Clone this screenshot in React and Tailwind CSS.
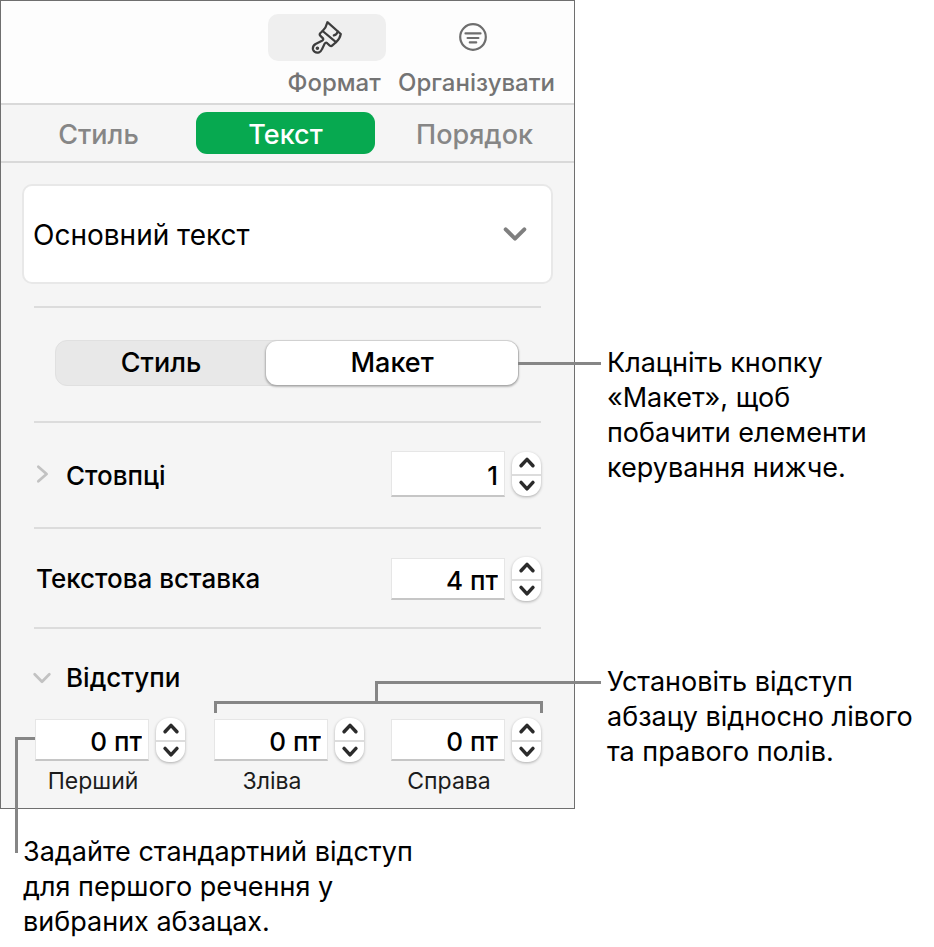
import React, { useState } from 'react';
import clsx from 'clsx';

const TABS = ['Стиль', 'Текст', 'Порядок'];
const VIEWS = ['Стиль', 'Макет'];

const Chevron = ({ d, className }) => (
    <svg
        viewBox="0 0 24 24"
        className={className}
        fill="none"
        stroke="currentColor"
        strokeLinecap="round"
        strokeLinejoin="round"
        aria-hidden="true"
    >
        <path d={d} />
    </svg>
);

const BrushIcon = () => (
    <svg
        viewBox="0 0 32 34"
        className="w-8 h-[34px]"
        fill="none"
        stroke="#3d3d3d"
        strokeWidth="2.2"
        strokeLinecap="round"
        strokeLinejoin="round"
        aria-hidden="true"
    >
        <path d="M16.4 1.2 L29.8 13 Q29 17.600 25 21.200 L11.6 10 Q15.2 6.4 16.4 1.2 Z" />
        <path d="M22.8 14.4 Q25.8 13.6 26.8 10.6" />
        <path d="M11.6 10 L9.2 12.2 Q8.2 13.4 9.2 14.6 L12 17.4 Q12.8 18.8 11 19.8 L4.6 23 Q1.2 25.200 2 28.600 Q3.800 32.600 8 31.400 Q10 30.600 11 28.200 L13.600 22.800 Q14.600 21 16.200 22.200 L18.800 24.600 Q20.200 25.600 21.400 24.400 L25 21.200" />
        <circle cx="6.400" cy="27.200" r="0.700" fill="#3d3d3d" />
    </svg>
);

const OrganizeIcon = () => (
    <svg
        viewBox="0 0 30 30"
        className="w-[30px] h-[30px]"
        fill="none"
        stroke="#6e6e6e"
        strokeWidth="2.2"
        strokeLinecap="round"
        aria-hidden="true"
    >
        <circle cx="15" cy="14" r="12.8" />
        <path d="M7.500 10.400 H22.500 M9.600 15 H20.400 M11.800 19.400 H18.200" />
    </svg>
);

const Stepper = ({ label, onStep }) => (
    <div className="flex flex-col w-[29px] h-11 shrink-0 rounded-[13px] bg-white shadow-[0_1px_3px_rgba(0,0,0,0.3)] text-[#2b2b2b]">
        <button
            type="button"
            aria-label={`${label}: збільшити`}
            onClick={() => onStep(1)}
            className="flex-1 flex items-center justify-center border-b-2 border-[#dcdcdc]"
        >
            <Chevron d="M5.500 15 L12 8 L18.500 15" className="w-[22px] h-[22px] stroke-[3.8]" />
        </button>
        <button
            type="button"
            aria-label={`${label}: зменшити`}
            onClick={() => onStep(-1)}
            className="flex-1 flex items-center justify-center"
        >
            <Chevron d="M5.500 7 L12 14 L18.500 7" className="w-[22px] h-[22px] stroke-[3.8]" />
        </button>
    </div>
);

const NumberField = ({ id, label, initial, unit, tall }) => {
    const [value, setValue] = useState(initial);

    return (
        <div className="flex items-center gap-[7px]">
            <input
                id={id}
                type="text"
                value={unit ? `${value} ${unit}` : value}
                onChange={(e) => setValue(parseInt(e.target.value, 10) || 0)}
                className={clsx(
                    'w-[114px] bg-white border border-[#e6e6e6] border-b-2 border-b-[#c6c6c6] pt-[3px] pr-[6px] text-right text-[26px] leading-8 font-medium text-black outline-none',
                    tall ? 'h-[46px]' : 'h-[42px]'
                )}
            />
            <Stepper label={label} onStep={(n) => setValue((v) => Math.max(0, v + n))} />
        </div>
    );
};

const IndentField = ({ id, label }) => (
    <div>
        <NumberField id={id} label={label} initial={0} unit="пт" />
        <label htmlFor={id} className="block w-[116px] mt-[5px] text-center text-[23px] leading-7 text-[#1c1c1c]">
            {label}
        </label>
    </div>
);

const Divider = () => <hr className="border-t-2 border-[#dcdcdc]" />;

const FormatPanel = () => {
    const [activeTab, setActiveTab] = useState('Текст');
    const [view, setView] = useState('Макет');

    return (
        <section className="border border-[#6f6f6f] bg-[#f5f5f5]">
            {/* toolbar */}
            <div className="flex justify-end gap-3 bg-[#fdfdfd] border-b-2 border-[#d9d9d9] pt-[13px] pb-[6px] pr-[19px] text-2xl leading-7 font-medium text-[#747474]">
                <button type="button" className="flex flex-col items-center gap-2">
                    <span className="flex items-center justify-center w-[118px] h-[47px] rounded-[10px] bg-[#efefef]">
                        <BrushIcon />
                    </span>
                    <span className="pl-[14px] leading-7">Формат</span>
                </button>
                <button type="button" className="flex flex-col items-center gap-2">
                    <span className="flex items-center justify-center h-[47px] pr-2">
                        <OrganizeIcon />
                    </span>
                    <span className="leading-7">Організувати</span>
                </button>
            </div>

            {/* tabs */}
            <div className="grid grid-cols-[195fr_179fr_199fr] border-b-2 border-[#d9d9d9] py-[7px]">
                {TABS.map((tab) => (
                    <button
                        key={tab}
                        type="button"
                        onClick={() => setActiveTab(tab)}
                        className={clsx(
                            'h-[42px] rounded-[11px] pt-[3px] text-[27px] leading-8 font-medium',
                            activeTab === tab ? 'bg-[#07a950] text-white' : 'text-[#868686]'
                        )}
                    >
                        {tab}
                    </button>
                ))}
            </div>

            <div className="px-[21px] pt-[21px]">
                <div className="relative">
                    <select
                        aria-label="Стиль абзацу"
                        className="appearance-none w-full h-[100px] rounded-[10px] border-2 border-[#e8e8e8] bg-white pt-[2px] pl-[9px] text-[28px] text-black outline-none"
                    >
                        <option>Основний текст</option>
                    </select>
                    <Chevron
                        d="M4 8 L12 16 L20 8"
                        className="pointer-events-none absolute right-6 top-9 w-7 h-7 stroke-[3.4] text-[#7f7f7f]"
                    />
                </div>
            </div>

            <div className="px-[33px] pt-[22px] pb-[13px]">
                <Divider />

                {/* style / layout switch */}
                <div className="relative grid grid-cols-[211fr_253fr] h-[46px] mt-8 mb-[35px] ml-[21px] mr-[22px] rounded-[12px] border border-[#e0e0e0] bg-[#e8e8e8]">
                    {VIEWS.map((name) => (
                        <button
                            key={name}
                            type="button"
                            onClick={() => setView(name)}
                            className={clsx(
                                'rounded-[11px] text-[27px] leading-8 font-medium text-black',
                                view === name && 'bg-white shadow-[0_1px_2px_1px_rgba(0,0,0,0.25)]'
                            )}
                        >
                            {name}
                        </button>
                    ))}
                    <span className="absolute left-full top-[21px] w-[83px] border-t-3 border-[#868686]" />
                </div>

                <Divider />

                <div className="flex items-center pt-7 pb-[30px]">
                    <Chevron d="M8 4 L17 12 L8 20" className="w-[22px] h-[22px] -ml-[3px] stroke-[3] text-[#c2c2c2]" />
                    <label htmlFor="columns" className="pt-[3px] ml-[13px] mr-auto text-[26px] leading-8 font-medium text-black">
                        Стовпці
                    </label>
                    <NumberField id="columns" label="Стовпці" initial={1} tall />
                </div>

                <Divider />

                <div className="flex items-center pt-7 pb-[26px]">
                    <label htmlFor="inset" className="ml-[2px] mr-auto text-[26px] leading-8 font-medium text-black">
                        Текстова вставка
                    </label>
                    <NumberField id="inset" label="Текстова вставка" initial={4} unit="пт" />
                </div>

                <Divider />

                <button type="button" className="flex items-center mt-[33px] text-[26px] leading-8 font-medium text-black">
                    <Chevron d="M4 8 L12 16 L20 8" className="w-[22px] h-[22px] -ml-[3px] stroke-[3] text-[#c2c2c2]" />
                    <span className="ml-[13px]">Відступи</span>
                </button>

                <div className="flex justify-between mt-6 pl-px">
                    <div className="relative">
                        <IndentField id="first" label="Перший" />
                        <span className="absolute -left-5 top-[19px] w-5 h-[116px] border-l-3 border-t-3 border-[#868686]" />
                    </div>
                    <div className="relative flex gap-[27px]">
                        <IndentField id="left" label="Зліва" />
                        <IndentField id="right" label="Справа" />
                        <span className="absolute left-0 -right-0.5 -top-[17px] h-3 border-t-3 border-x-3 border-[#868686]" />
                        <span className="absolute left-[161px] -right-[60px] -top-[37px] h-5 border-l-3 border-t-3 border-[#868686]" />
                    </div>
                </div>
            </div>
        </section>
    );
};

const App = () => (
    <main className="grid grid-cols-[575fr_359fr] bg-white font-['Inter','Liberation_Sans',sans-serif] text-[27px] leading-[35px] text-black">
        <FormatPanel />
        <div className="pl-8 pt-[345px]">
            <p>
                Клацніть кнопку
                <br />
                «Макет», щоб
                <br />
                побачити елементи
                <br />
                керування нижче.
            </p>
            <p className="mt-[179px]">
                Установіть відступ
                <br />
                абзацу відносно лівого
                <br />
                та правого полів.
            </p>
        </div>
        <p className="pl-[23px] pt-[25px]">
            Задайте стандартний відступ
            <br />
            для першого речення у
            <br />
            вибраних абзацах.
        </p>
    </main>
);

export default App;
